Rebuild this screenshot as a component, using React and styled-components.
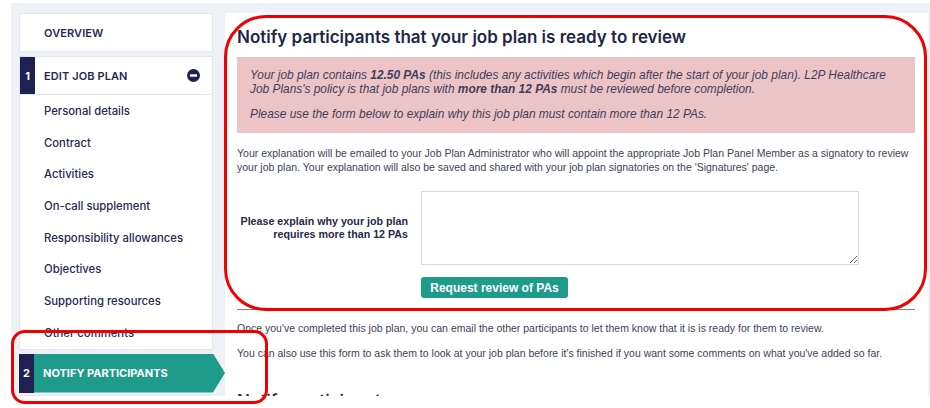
import React from 'react';
import styled, { createGlobalStyle } from 'styled-components';

const GlobalStyle = createGlobalStyle`
  html, body {
    margin: 0;
    padding: 0;
    background: #ffffff;
    overflow: hidden;
  }
  * { box-sizing: border-box; }
`;

const Page = styled.div`
  position: relative;
  width: 930px;
  height: 408px;
  overflow: hidden;
`;

const Frame = styled.div`
  display: flex;
  gap: 12px;
  margin: 3px 0 0 11px;
  padding: 10px 2px 0 8px;
  height: 393px;
  overflow: hidden;
  background: #eef2f6;
`;

const Sidebar = styled.nav`
  width: 194px;
  flex-shrink: 0;
  display: flex;
  flex-direction: column;
  gap: 4px;
  font-family: Inter, "Open Sans", sans-serif;
  color: #262a52;

  & > * { flex-shrink: 0; }
`;

const Card = styled.div`
  background: #ffffff;
  border: 1px solid #e3e7ec;
`;

const StepRow = styled.div`
  display: flex;
  align-items: stretch;
  height: ${p => p.$height || 38}px;
  border-bottom: ${p => (p.$divider ? '1px solid #e3e7ec' : 'none')};
`;

const Badge = styled.div`
  width: 15px;
  flex-shrink: 0;
  background: #1f2150;
  color: #ffffff;
  font-size: 11px;
  font-weight: 700;
  display: flex;
  align-items: center;
  justify-content: center;
`;

const StepLabel = styled.div`
  flex: 1;
  display: flex;
  align-items: center;
  justify-content: space-between;
  padding: 0 12px 0 ${p => (p.$badge ? 9 : 24)}px;
  font-size: 11px;
  font-weight: 600;
  letter-spacing: 0.1px;
  text-transform: uppercase;
`;

const SubItem = styled.div`
  height: 31.7px;
  display: flex;
  align-items: center;
  padding-left: 24px;
  font-size: 11.3px;
  font-weight: 500;
  white-space: nowrap;
`;

const ActiveStep = styled.div`
  display: flex;
  height: 39px;
  margin-right: -12px;
`;

const ActiveLabel = styled.div`
  flex: 1;
  display: flex;
  align-items: center;
  padding-left: 9px;
  background: #1e9b8b;
  color: #ffffff;
  font-size: 11px;
  font-weight: 700;
  clip-path: polygon(0 0, calc(100% - 12px) 0, 100% 50%, calc(100% - 12px) 100%, 0 100%);
`;

const NextStep = styled(Card)`
  display: flex;
  height: 39px;
  margin-top: -2px;
`;

const Main = styled.main`
  flex: 1;
  background: #ffffff;
  padding: 14px 13px 0 12px;
  font-family: "Liberation Sans", Arial, sans-serif;
  color: #3e4256;
`;

const Heading = styled.h1`
  margin: 0 0 ${p => p.$mb || 0}px;
  margin-top: ${p => p.$mt || 0}px;
  font-family: Inter, "Open Sans", sans-serif;
  font-size: 17px;
  line-height: 20px;
  font-weight: 600;
  color: #1f2748;
  white-space: nowrap;
`;

const Alert = styled.div`
  background: #edc4c5;
  padding: 11px 13px 12px;
  font-style: italic;
  font-size: 11.9px;
  line-height: 14px;
  color: #3e3f5e;

  p { margin: 0; }
  p + p { margin-top: 11px; }
`;

const Text = styled.p`
  margin: ${p => p.$mt || 11}px 0 0;
  font-size: 10.5px;
  line-height: 14px;
`;

const FormRow = styled.div`
  display: flex;
  align-items: center;
  gap: 13px;
  margin-top: 17px;
`;

const Label = styled.label`
  width: 171px;
  text-align: right;
  font-size: 10.7px;
  line-height: 13.5px;
  font-weight: 700;
  color: #262a45;
  white-space: nowrap;
`;

const TextArea = styled.textarea`
  width: 438px;
  height: 74px;
  border: 1px solid #dcdcdc;
  border-radius: 0;
  font-family: inherit;
  resize: both;
  outline: none;
`;

const Button = styled.button`
  display: block;
  margin: 12px 0 0 184px;
  width: 147px;
  height: 21px;
  border: none;
  border-radius: 3px;
  background: #1e9b8b;
  color: #ffffff;
  font-family: "Liberation Sans", Arial, sans-serif;
  font-size: 12px;
  font-weight: 700;
`;

const Rule = styled.hr`
  margin: 11px 0 0;
  border: none;
  border-top: 1px solid #7d8198;
`;

const Annotation = styled.div`
  position: absolute;
  left: ${p => p.$x}px;
  top: ${p => p.$y}px;
  width: ${p => p.$w}px;
  height: ${p => p.$h}px;
  border: 3px solid #f00000;
  border-radius: ${p => p.$r}px;
  pointer-events: none;
`;

function MinusIcon () {
    return (
        <svg width="13" height="13" viewBox="0 0 13 13">
            <circle cx="6.5" cy="6.5" r="6.5" fill="#1f2150" />
            <rect x="3" y="5.3" width="7" height="2.4" fill="#ffffff" />
        </svg>
    );
}

export default function App () {
    const subItems = [
        'Personal details',
        'Contract',
        'Activities',
        'On-call supplement',
        'Responsibility allowances',
        'Objectives',
        'Supporting resources',
        'Other comments'
    ];

    return (
        <Page>
            <GlobalStyle />
            <Frame>
                <Sidebar>
                    <Card>
                        <StepRow $height={37}>
                            <StepLabel>Overview</StepLabel>
                        </StepRow>
                    </Card>
                    <Card>
                        <StepRow $divider>
                            <Badge>1</Badge>
                            <StepLabel $badge>
                                Edit Job Plan
                                <MinusIcon />
                            </StepLabel>
                        </StepRow>
                        {subItems.map(item => <SubItem key={item}>{item}</SubItem>)}
                    </Card>
                    <ActiveStep>
                        <Badge>2</Badge>
                        <ActiveLabel>NOTIFY PARTICIPANTS</ActiveLabel>
                    </ActiveStep>
                    <NextStep>
                        <Badge>3</Badge>
                        <StepLabel $badge>Sign off</StepLabel>
                    </NextStep>
                </Sidebar>
                <Main>
                    <Heading $mb={10}>Notify participants that your job plan is ready to review</Heading>
                    <Alert>
                        <p>
                            Your job plan contains <b>12.50 PAs</b> (this includes any activities which begin after the start of your job plan). L2P Healthcare Job Plans's policy is that job plans with <b>more than 12 PAs</b> must be reviewed before completion.
                        </p>
                        <p>Please use the form below to explain why this job plan must contain more than 12 PAs.</p>
                    </Alert>
                    <Text $mt={13}>
                        Your explanation will be emailed to your Job Plan Administrator who will appoint the appropriate Job Plan Panel Member as a signatory to review your job plan. Your explanation will also be saved and shared with your job plan signatories on the 'Signatures' page.
                    </Text>
                    <FormRow>
                        <Label htmlFor="reason">Please explain why your job plan<br />requires more than 12 PAs</Label>
                        <TextArea id="reason" />
                    </FormRow>
                    <Button type="button">Request review of PAs</Button>
                    <Rule />
                    <Text>Once you've completed this job plan, you can email the other participants to let them know that it is is ready for them to review.</Text>
                    <Text>You can also use this form to ask them to look at your job plan before it's finished if you want some comments on what you've added so far.</Text>
                    <Heading $mt={31}>Notify participants</Heading>
                </Main>
            </Frame>
            <Annotation $x={224} $y={15} $w={703} $h={296} $r={42} />
            <Annotation $x={11} $y={330} $w={257} $h={74} $r={14} />
        </Page>
    );
}
